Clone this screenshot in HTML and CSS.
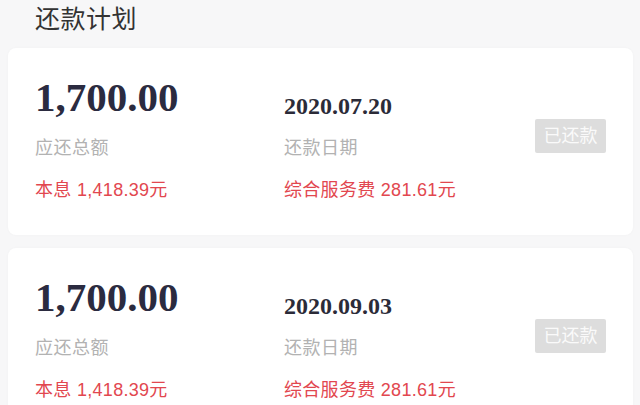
FILE: index.html
```html
<!DOCTYPE html>
<html lang="zh-CN">
<head>
<meta charset="utf-8">
<title>还款计划</title>
<link rel="stylesheet" href="styles.css">
</head>
<body>
<div class="page">
  <h1 class="title">还款计划</h1>
  <div class="card">
    <div class="amount">1,700.00</div>
    <div class="date">2020.07.20</div>
    <div class="badge">已还款</div>
    <div class="label">应还总额</div>
    <div class="label">还款日期</div>
    <div class="red">本息 1,418.39元</div>
    <div class="red">综合服务费 281.61元</div>
  </div>
  <div class="card">
    <div class="amount">1,700.00</div>
    <div class="date">2020.09.03</div>
    <div class="badge">已还款</div>
    <div class="label">应还总额</div>
    <div class="label">还款日期</div>
    <div class="red">本息 1,418.39元</div>
    <div class="red">综合服务费 281.61元</div>
  </div>
</div>
</body>
</html>
```
FILE: styles.css
```css
html, body {
  margin: 0;
  padding: 0;
  background: #f7f7f8;
  overflow: hidden;
}
.page {
  width: 640px;
  height: 405px;
  overflow: hidden;
  font-family: "Liberation Sans", "Noto Sans CJK SC", sans-serif;
}
.title {
  margin: 0;
  height: 48px;
  padding-left: 35px;
  font-size: 25px;
  line-height: 38px;
  font-weight: normal;
  color: #333;
  letter-spacing: 0.5px;
}
.card {
  margin: 0 7px 13px 8px;
  height: 187px;
  box-sizing: border-box;
  background: #fff;
  border-radius: 8px;
  box-shadow: 0 0 3px rgba(0, 0, 0, 0.03);
  padding: 27px 27px 32px 27px;
  display: grid;
  grid-template-columns: 249px 251px 71px;
  grid-template-rows: 44px 26px 26px;
  row-gap: 16px;
}
.amount {
  font-family: "Liberation Serif", serif;
  font-weight: bold;
  font-size: 41px;
  line-height: 44px;
  color: #2b2b40;
}
.date {
  align-self: end;
  font-family: "Liberation Serif", serif;
  font-weight: bold;
  font-size: 24px;
  line-height: 26px;
  color: #2b2b38;
}
.badge {
  grid-column: 3;
  grid-row: 1 / 4;
  align-self: start;
  margin-top: 44px;
  height: 34px;
  line-height: 34px;
  text-align: center;
  background: #dddddd;
  color: #fafafa;
  font-size: 18px;
  border-radius: 2px;
}
.label {
  font-size: 18px;
  line-height: 26px;
  color: #b2b2b2;
  letter-spacing: 0.5px;
}
.red {
  font-size: 18px;
  line-height: 26px;
  color: #e2474f;
  letter-spacing: 0.3px;
}
```
